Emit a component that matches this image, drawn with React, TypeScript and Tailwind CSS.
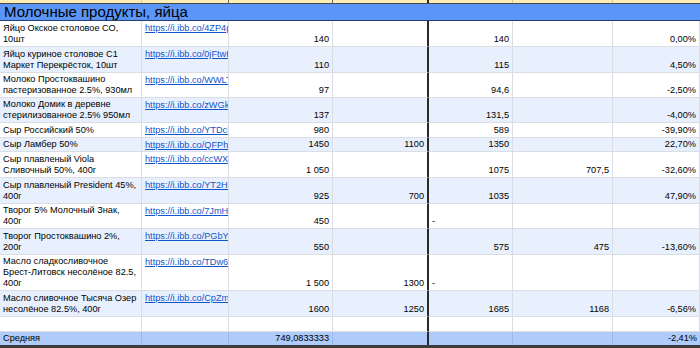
import React from "react";

interface Row {
  name: string;
  link: string;
  price: string;
  promo: string;
  now: string;
  nowPromo: string;
  change: string;
  h: string;
  bg: string;
}

const rows: Row[] = [
  { name: "Яйцо Окское столовое СО, 10шт", link: "https://i.ibb.co/4ZP4pRk", price: "140", promo: "", now: "140", nowPromo: "", change: "0,00%", h: "h-[26px]", bg: "bg-white" },
  { name: "Яйцо куриное столовое С1 Маркет Перекрёсток, 10шт", link: "https://i.ibb.co/0jFtwKq", price: "110", promo: "", now: "115", nowPromo: "", change: "4,50%", h: "h-[26px]", bg: "bg-[#e8f0fe]" },
  { name: "Молоко Простоквашино пастеризованное 2.5%, 930мл", link: "https://i.ibb.co/WWLTx2b", price: "97", promo: "", now: "94,6", nowPromo: "", change: "-2,50%", h: "h-[25px]", bg: "bg-white" },
  { name: "Молоко Домик в деревне стерилизованное 2.5% 950мл", link: "https://i.ibb.co/zWGkT4m", price: "137", promo: "", now: "131,5", nowPromo: "", change: "-4,00%", h: "h-[25px]", bg: "bg-[#e8f0fe]" },
  { name: "Сыр Российский 50%", link: "https://i.ibb.co/YTDcl8s", price: "980", promo: "", now: "589", nowPromo: "", change: "-39,90%", h: "h-[15px]", bg: "bg-white" },
  { name: "Сыр Ламбер 50%", link: "https://i.ibb.co/QFPh3nV", price: "1450", promo: "1100", now: "1350", nowPromo: "", change: "22,70%", h: "h-[14px]", bg: "bg-[#e8f0fe]" },
  { name: "Сыр плавленый Viola Сливочный 50%, 400г", link: "https://i.ibb.co/ccWXy7d", price: "1 050", promo: "", now: "1075", nowPromo: "707,5", change: "-32,60%", h: "h-[26px]", bg: "bg-white" },
  { name: "Сыр плавленый President 45%, 400г", link: "https://i.ibb.co/YT2Hf9c", price: "925", promo: "700", now: "1035", nowPromo: "", change: "47,90%", h: "h-[26px]", bg: "bg-[#e8f0fe]" },
  { name: "Творог 5% Молочный Знак, 400г", link: "https://i.ibb.co/7JmHs1w", price: "450", promo: "", now: "-", nowPromo: "", change: "", h: "h-[25px]", bg: "bg-white" },
  { name: "Творог Простоквашино 2%, 200г", link: "https://i.ibb.co/PGbYq5z", price: "550", promo: "", now: "575", nowPromo: "475", change: "-13,60%", h: "h-[26px]", bg: "bg-[#e8f0fe]" },
  { name: "Масло сладкосливочное Брест-Литовск несолёное 82.5, 400г", link: "https://i.ibb.co/TDw6Lp0", price: "1 500", promo: "1300", now: "-", nowPromo: "", change: "", h: "h-[36px]", bg: "bg-white" },
  { name: "Масло сливочное Тысяча Озер несолёное 82.5%, 400г", link: "https://i.ibb.co/CpZmN3r", price: "1600", promo: "1250", now: "1685", nowPromo: "1168", change: "-6,56%", h: "h-[26px]", bg: "bg-[#e8f0fe]" },
  { name: "", link: "", price: "", promo: "", now: "", nowPromo: "", change: "", h: "h-[15px]", bg: "bg-white" },
];

const cols = "grid grid-cols-[142px_87px_104px_96px_84px_100px_87px]";
const cell = "border-r border-b border-[#dadde3] px-[3px] pb-[1px] overflow-hidden";
const num = `${cell} flex items-end justify-end whitespace-nowrap`;

function NowCell({ value }: { value: string }) {
  if (value === "-") {
    return <div className={`${cell} flex items-end justify-start`}>-</div>;
  }
  return <div className={num}>{value}</div>;
}

export default function App() {
  return (
    <div
      className="w-[700px] h-[348px] overflow-hidden bg-white text-[9.2px] leading-[11px] text-black"
      style={{ fontFamily: '"Liberation Sans", Arial, sans-serif' }}
    >
      <div className={`${cols} h-[4px] bg-[#fdeeb4] border-b border-[#4a4a4a]`}>
        <div className="border-r border-[#d8c98f]" />
        <div className="border-r border-[#6b6b6b]" />
        <div className="border-r border-[#6b6b6b]" />
        <div className="border-r-2 border-[#2a2a2a]" />
        <div className="border-r border-[#d8c98f]" />
        <div className="border-r border-[#d8c98f]" />
        <div />
      </div>
      <div className="h-[17px] bg-[#5a95f7] border-b border-[#24406e] flex items-center pl-[4px] text-[15px] leading-[16px]">
        Молочные продукты, яйца
      </div>
      {rows.map((r, i) => (
        <div key={i} className={`${cols} ${r.h} ${r.bg}`}>
          <div className={`${cell} flex items-end`}>{r.name}</div>
          <div className={`${cell} pt-[2px] whitespace-nowrap`}>
            {r.link && <span className="text-[#1155cc] underline">{r.link}</span>}
          </div>
          <div className={num}>{r.price}</div>
          <div className={`${num} border-r-2 border-r-[#2a2a2a]`}>{r.promo}</div>
          <NowCell value={r.now} />
          <div className={num}>{r.nowPromo}</div>
          <div className={num}>{r.change}</div>
        </div>
      ))}
      <div className={`${cols} h-[16px] bg-[#aecbfa] border-b-[3px] border-[#3c3c3c]`}>
        <div className="border-r border-[#9db8e6] px-[3px] flex items-center">Средняя</div>
        <div className="border-r border-[#9db8e6]" />
        <div className="border-r border-[#9db8e6] px-[3px] flex items-center justify-end">749,0833333</div>
        <div className="border-r-2 border-[#2a2a2a]" />
        <div className="border-r border-[#9db8e6]" />
        <div className="border-r border-[#9db8e6]" />
        <div className="px-[3px] flex items-center justify-end">-2,41%</div>
      </div>
    </div>
  );
}
